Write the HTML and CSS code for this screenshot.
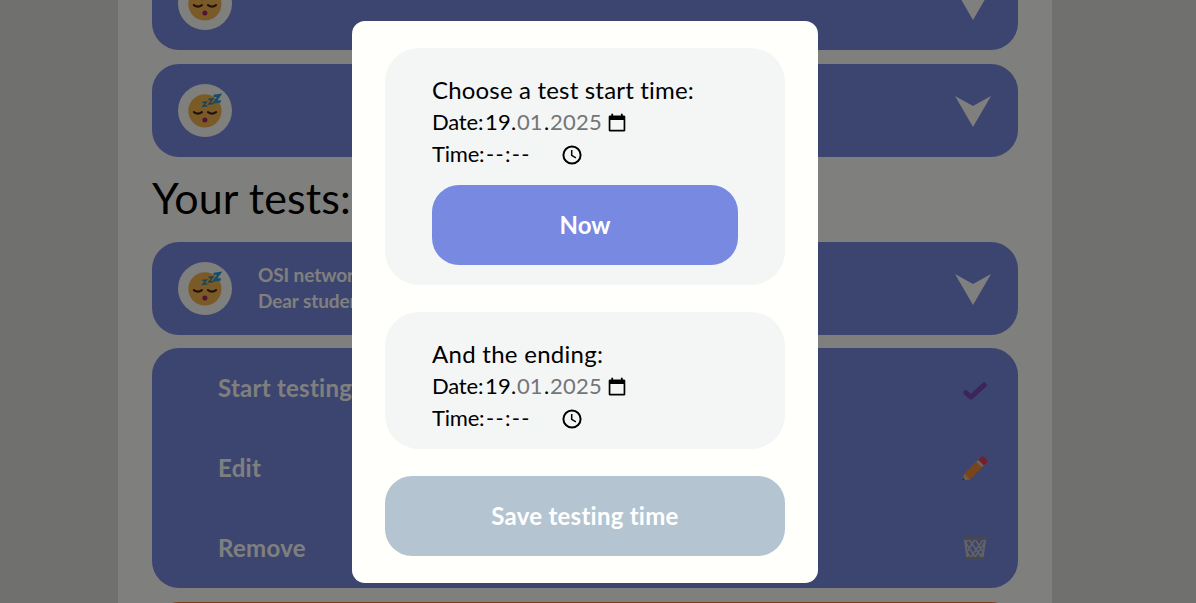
FILE: index.html
```
<!DOCTYPE html>
<html lang="en">
<head>
<meta charset="utf-8">
<title>Your tests</title>
<link rel="stylesheet" href="styles.css">
</head>
<body>
<svg width="0" height="0" class="defs">
  <symbol id="sleepy" viewBox="0 0 36 36">
    <circle cx="17.9" cy="17.9" r="16.600" fill="#f5b44c"/>
    <path d="M6.900 19.200q4 2.800 8 0M21 19.200q4 2.800 8 0" fill="none" stroke="#402020" stroke-width="2.200" stroke-linecap="round"/>
    <circle cx="17.900" cy="27" r="2.500" fill="#a8266a"/>
    <path d="M15.300 9.500l4-.5-3.200 4.300 4.200-.5" fill="none" stroke="#3b88a8" stroke-width="1.500"/>
    <path d="M21.400 6.400l4.200-.5-3.600 5.100 4.300-.5" fill="none" stroke="#3b88a8" stroke-width="1.600"/>
    <path d="M26.600 3.100l6-.9-5 7 6.200-1" fill="none" stroke="#3399d0" stroke-width="2.500"/>
  </symbol>
  <symbol id="arrow" viewBox="0 0 36 31"><path d="M0 0l18 10L36 0 18 31z" fill="#fffffb"/></symbol>
  <symbol id="calendar" viewBox="0 0 18 20"><path d="M2 2.500h14a1.300 1.300 0 0 1 1.300 1.300v13.400a1.300 1.300 0 0 1-1.300 1.300H2a1.300 1.300 0 0 1-1.300-1.300V3.800A1.300 1.300 0 0 1 2 2.500zM2.400 7v9.800h13.200V7z" fill="#000" fill-rule="evenodd"/><path d="M4.200 .7v3M13.800 .7v3" stroke="#000" stroke-width="1.800"/></symbol>
  <symbol id="clock" viewBox="0 0 20 20"><circle cx="10" cy="10" r="8.600" fill="none" stroke="#000" stroke-width="2"/><path d="M9.700 5v5.400l4.200 2.400" fill="none" stroke="#000" stroke-width="1.500"/></symbol>
</svg>
<main class="page">
  <div class="card">
    <span class="avatar"><svg class="face"><use href="#sleepy"/></svg></span>
    <svg class="arrow"><use href="#arrow"/></svg>
  </div>
  <div class="card">
    <span class="avatar"><svg class="face"><use href="#sleepy"/></svg></span>
    <svg class="arrow"><use href="#arrow"/></svg>
  </div>
  <h1 class="title">Your tests:</h1>
  <div class="card">
    <span class="avatar"><svg class="face"><use href="#sleepy"/></svg></span>
    <div class="info"><div>OSI network</div><div>Dear students</div></div>
    <svg class="arrow"><use href="#arrow"/></svg>
  </div>
  <div class="menu">
    <div class="item"><span class="start">Start testing</span>
      <svg class="icon" viewBox="0 0 26 26"><path d="M3.800 17.700l5.200 4.500L22.300 9.900" fill="none" stroke="#7c4aae" stroke-width="5" stroke-linecap="round" stroke-linejoin="round"/></svg>
    </div>
    <div class="item"><span>Edit</span>
      <svg class="icon" viewBox="0 0 26 26"><path d="M2 18.700L15.200 5.500l6 5.700L8 24.700z" fill="#ee8a3c"/><path d="M2 18.500l6 6L1 25.600z" fill="#e8b878"/><path d="M1.200 23.300l1.500 1.500L.8 25.500z" fill="#333"/><path d="M14.300 7l2.500-2.500 5.600 5.300-2.600 2.500z" fill="#cfc8c0"/><path d="M16.300 5l3-3.200q1.300-1 2.600 0L25 4.900q1 1.300 0 2.500L21.800 10.400z" fill="#e93f58"/></svg>
    </div>
    <div class="item"><span>Remove</span>
      <svg class="icon" viewBox="0 0 26 26"><path d="M2.800 4l2.700 19h15l2.700-19" fill="none" stroke="#c4c4c6" stroke-width="2"/><path d="M3.500 8L6.500 4l13 18M9 22L21.500 4l1.500 3M3.800 8l9.400 14L23 7M5 17l8-13 8 13M5 17l3 5M21 17l-3 5" fill="none" stroke="#c4c4c6" stroke-width="1.600"/><path d="M1.200 1.700h23.600v3.200H1.200zM4 22h18v2.600q-9 1-18 0z" fill="#929292"/></svg>
    </div>
  </div>
  <div class="next"></div>
</main>
<div class="overlay">
  <section class="modal">
    <div class="group">
      <div class="row heading">Choose a test start time:</div>
      <div class="row field"><span class="label">Date:</span><span class="day">19</span><span class="dot">.</span><span class="month">01</span><span class="dot">.</span><span class="year">2025</span><svg class="calendar"><use href="#calendar"/></svg></div>
      <div class="row field"><span class="label time">Time:</span><span class="dashes">--:--</span><svg class="clock"><use href="#clock"/></svg></div>
      <button class="button now">Now</button>
    </div>
    <div class="group ending">
      <div class="row heading end">And the ending:</div>
      <div class="row field"><span class="label">Date:</span><span class="day">19</span><span class="dot">.</span><span class="month">01</span><span class="dot">.</span><span class="year">2025</span><svg class="calendar"><use href="#calendar"/></svg></div>
      <div class="row field"><span class="label time">Time:</span><span class="dashes">--:--</span><svg class="clock"><use href="#clock"/></svg></div>
    </div>
    <button class="button save">Save testing time</button>
  </section>
</div>
</body>
</html>
```
FILE: styles.css
```
* { box-sizing: border-box; }
html, body { height: 603px; overflow: hidden; }
body { margin: 0; background: #e1e1de; font-family: Lato, "Open Sans", sans-serif; font-weight: 400; color: #000; font-variant-ligatures: none; }
.defs { position: absolute; }
.page { width: 934px; height: 603px; margin-left: 118px; padding: 0 34px; background: #fffffb; overflow: hidden; }
.card { height: 93px; border-radius: 27px; background: #7889e1; padding: 0 27px 0 26px; display: flex; align-items: center; margin-bottom: 13px; }
.card:first-child { margin-top: -43px; margin-bottom: 14px; }
.card:nth-child(2) { margin-bottom: 0; }
.avatar { width: 54px; height: 53px; border-radius: 50%; background: #fffffb; display: flex; align-items: center; justify-content: center; }
.face { width: 36px; height: 36px; }
.arrow { width: 36px; height: 31px; margin-left: auto; margin-top: 2px; }
.info { margin-left: 26px; padding-bottom: 2px; color: #fffffb; font-size: 19px; font-weight: 700; line-height: 26px; letter-spacing: -0.1px; }
.title { margin: 0; height: 85px; line-height: 81px; font-size: 43px; font-weight: 400; letter-spacing: 0.1px; }
.menu { height: 240px; border-radius: 27px; background: #7889e1; padding: 0 30px 0 66px; }
.item { height: 80px; display: flex; align-items: center; justify-content: space-between; font-size: 24px; font-weight: 700; color: #fffffb; letter-spacing: 0.3px; }
.item span { padding-bottom: 2px; }
.item .start { letter-spacing: 0.25px; }
.icon { width: 26px; height: 26px; }
.next { height: 93px; border-radius: 27px; background: #f47b32; margin-top: 14px; }
.overlay { position: absolute; inset: 0; background: rgba(0, 0, 0, 0.5); padding: 21px 0 0 352px; }
.modal { width: 466px; height: 562px; border-radius: 13px; background: #fffffb; padding: 27px 33px; }
.group { height: 237px; border-radius: 34px; background: #f4f6f6; padding: 27px 47px 20px; margin-bottom: 27px; }
.ending { height: 137px; }
.row { height: 32px; line-height: 30px; white-space: nowrap; }
.heading { font-size: 24px; letter-spacing: 0.18px; }
.end { letter-spacing: 0.28px; }
.field { display: flex; font-size: 22px; }
.label { width: 53px; letter-spacing: -0.2px; }
.day { width: 26px; letter-spacing: 0.2px; }
.dot { width: 6px; }
.month { width: 27px; color: #757575; }
.year { width: 57.5px; color: #757575; letter-spacing: 0.2px; }
.calendar { width: 18px; height: 20px; margin-top: 5.500px; }
.dashes { width: 76.500px; padding-left: 1px; letter-spacing: 1.3px; }
.clock { width: 20px; height: 20px; margin-top: 6px; }
.button { display: block; width: 100%; height: 80px; border: 0; border-radius: 27px; color: #fff; font: 700 24px Lato, sans-serif; font-variant-ligatures: none; padding: 0 0 2px; }
.now { background: #7889e1; margin-top: 14px; }
.save { background: #b4c5d1; letter-spacing: 0.25px; }
```
